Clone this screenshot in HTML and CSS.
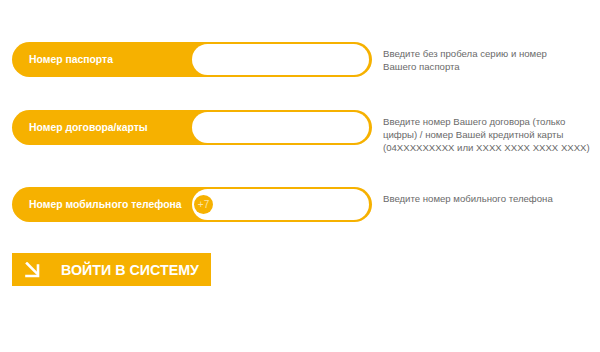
FILE: index.html
```html
<!DOCTYPE html>
<html lang="ru">
<head>
<meta charset="utf-8">
<title>Вход</title>
<link rel="stylesheet" href="styles.css">
</head>
<body>
<div class="page">
  <div class="fields">
    <div class="row">
      <div class="pill">
        <span class="label">Номер паспорта</span>
        <span class="input"></span>
      </div>
      <p class="hint">Введите без пробела серию и номер<br>Вашего паспорта</p>
    </div>
    <div class="row">
      <div class="pill">
        <span class="label">Номер договора/карты</span>
        <span class="input"></span>
      </div>
      <p class="hint">Введите номер Вашего договора (только<br>цифры) / номер Вашей кредитной карты<br>(04XXXXXXXXX или XXXX XXXX XXXX XXXX)</p>
    </div>
    <div class="row">
      <div class="pill">
        <span class="label">Номер мобильного телефона</span>
        <span class="input"><span class="prefix">+7</span></span>
      </div>
      <p class="hint">Введите номер мобильного телефона</p>
    </div>
  </div>
  <button class="submit" type="button">
    <svg class="arrow" width="16" height="16" viewBox="0 0 16 16" aria-hidden="true">
      <path d="M3 1.5 L12.5 11" fill="none" stroke="#fff" stroke-width="2.6" stroke-linecap="square"/>
      <path d="M2.5 14 H14 V3.5" fill="none" stroke="#fff" stroke-width="2.6" stroke-linecap="square"/>
    </svg>
    <span class="submit-text">ВОЙТИ В СИСТЕМУ</span>
  </button>
</div>
</body>
</html>
```

FILE: styles.css
```css
html, body {
  margin: 0;
  padding: 0;
  background: #fff;
}

body {
  font-family: "Liberation Sans", Arial, sans-serif;
}

.page {
  padding: 42px 0 0 12px;
}

.fields {
  display: flex;
  flex-direction: column;
  gap: 33px;
}

.row {
  display: flex;
  align-items: flex-start;
}

.pill {
  flex: 0 0 360px;
  height: 35px;
  border-radius: 18px;
  background: #f6b100;
  display: flex;
  align-items: center;
  box-sizing: border-box;
}

.label {
  flex: 0 0 180px;
  box-sizing: border-box;
  padding-left: 17px;
  color: #fff;
  font-size: 10.4px;
  font-weight: bold;
  white-space: nowrap;
}

.input {
  flex: 0 0 177px;
  height: 31px;
  border-radius: 16px;
  background: #fff;
  display: flex;
  align-items: center;
}

.prefix {
  width: 19px;
  height: 19px;
  margin-left: 2px;
  border-radius: 50%;
  background: #f6b100;
  color: #fbe3a6;
  font-size: 10px;
  display: flex;
  align-items: center;
  justify-content: center;
}

.hint {
  margin: 0 0 0 11px;
  padding-top: 5px;
  font-size: 9.6px;
  line-height: 13px;
  color: #6a6a6a;
}

.submit {
  margin-top: 31px;
  width: 199px;
  height: 33px;
  border: 0;
  padding: 0 0 0 12px;
  background: #f6b100;
  display: flex;
  align-items: center;
  cursor: pointer;
}

.arrow {
  flex: 0 0 16px;
}

.submit-text {
  display: inline-block;
  margin-left: 21px;
  color: #fff;
  font-size: 15.5px;
  font-weight: bold;
  white-space: nowrap;
  transform: scaleX(0.92);
  transform-origin: left center;
}
```
